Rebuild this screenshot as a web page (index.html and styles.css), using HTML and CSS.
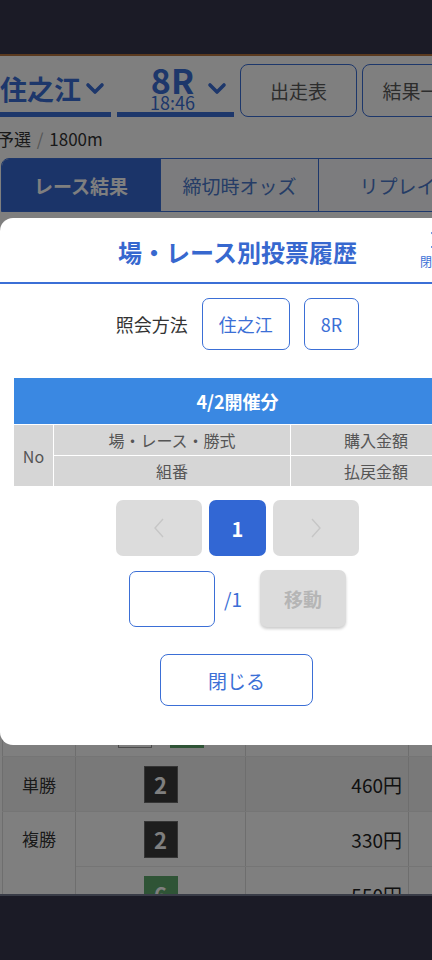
FILE: index.html
```html
<!DOCTYPE html>
<html lang="ja">
<head>
    <meta charset="UTF-8">
    <meta name="viewport" content="width=device-width, initial-scale=1.0">
    <title>場・レース別投票履歴</title>
    <link rel="stylesheet" href="styles.css">
</head>
<body>
    <div class="topbar"></div>

    <div class="page">
        <!-- Race selector -->
        <div class="race-nav">
            <div class="sel sel-place">
                <span class="place-name">住之江</span>
                <svg class="chev" width="20" height="13" viewBox="0 0 20 13"><path d="M3 3 L10 10 L17 3" fill="none" stroke="currentColor" stroke-width="3.6" stroke-linecap="round" stroke-linejoin="round"/></svg>
            </div>
            <div class="sel sel-race">
                <div class="race-label">
                    <span class="race-no">8R</span>
                    <span class="race-time">18:46</span>
                </div>
                <svg class="chev" width="20" height="13" viewBox="0 0 20 13"><path d="M3 3 L10 10 L17 3" fill="none" stroke="currentColor" stroke-width="3.6" stroke-linecap="round" stroke-linejoin="round"/></svg>
            </div>
            <button class="nav-btn">出走表</button>
            <button class="nav-btn">結果一覧</button>
        </div>

        <div class="race-meta">予選 <span class="slash">/</span> 1800m</div>

        <div class="tabs">
            <div class="tab active">レース結果</div>
            <div class="tab">締切時オッズ</div>
            <div class="tab">リプレイ</div>
        </div>

        <!-- Payouts -->
        <div class="section-title">払戻金</div>
        <table class="payouts">
            <tr class="head"><th>勝式</th><th>組番</th><th>払戻金</th><th>人気</th></tr>
            <tr class="odd"><td>3連単</td><td><span class="boat b2">2</span><span class="boat b6">6</span><span class="boat b1">1</span></td><td class="amt">4,560円</td><td>12</td></tr>
            <tr><td>3連複</td><td><span class="boat b1">1</span><span class="boat b2">2</span><span class="boat b6">6</span></td><td class="amt">1,230円</td><td>5</td></tr>
            <tr class="odd"><td>2連単</td><td><span class="boat b2">2</span><span class="boat b6">6</span></td><td class="amt">2,140円</td><td>8</td></tr>
            <tr><td>2連複</td><td><span class="boat b2">2</span><span class="boat b6">6</span></td><td class="amt">1,020円</td><td>4</td></tr>
            <tr class="odd"><td rowspan="3" class="top">拡連複</td><td><span class="boat b2">2</span><span class="boat b6">6</span></td><td class="amt">380円</td><td>4</td></tr>
            <tr class="odd"><td><span class="boat b1">1</span><span class="boat b2">2</span></td><td class="amt">210円</td><td>2</td></tr>
            <tr class="odd"><td><span class="boat b1">1</span><span class="boat b6">6</span></td><td class="amt">450円</td><td>6</td></tr>
            <tr class="even-alt"><td>単勝</td><td><span class="boat b2">2</span></td><td class="amt">460円</td><td>2</td></tr>
            <tr><td rowspan="2" class="top">複勝</td><td><span class="boat b2">2</span></td><td class="amt">330円</td><td>3</td></tr>
            <tr><td><span class="boat b6">6</span></td><td class="amt">550円</td><td>5</td></tr>
        </table>

        <div class="overlay"></div>

        <!-- Vote history dialog -->
        <div class="modal">
            <div class="modal-head">
                <div class="modal-title">場・レース別投票履歴</div>
                <button class="modal-x">
                    <svg width="16" height="18" viewBox="0 0 16 18"><path d="M1 2 L15 16 M15 2 L1 16" stroke="currentColor" stroke-width="1.8" stroke-linecap="round"/></svg>
                    <span>閉じる</span>
                </button>
            </div>

            <div class="query">
                <span class="query-label">照会方法</span>
                <button class="q-btn">住之江</button>
                <button class="q-btn">8R</button>
            </div>

            <div class="day-head">4/2開催分</div>
            <div class="hist-table">
                <div class="cell no">No</div>
                <div class="cell">場・レース・勝式</div>
                <div class="cell">購入金額</div>
                <div class="cell">組番</div>
                <div class="cell">払戻金額</div>
            </div>

            <div class="pager">
                <button class="pg pg-arrow">
                    <svg width="10" height="20" viewBox="0 0 10 20"><path d="M9 1 L1 10 L9 19" fill="none" stroke="currentColor" stroke-width="1.4"/></svg>
                </button>
                <button class="pg pg-current">1</button>
                <button class="pg pg-arrow">
                    <svg width="10" height="20" viewBox="0 0 10 20"><path d="M1 1 L9 10 L1 19" fill="none" stroke="currentColor" stroke-width="1.4"/></svg>
                </button>
            </div>

            <div class="jump">
                <input class="jump-input" type="text">
                <span class="jump-total">/1</span>
                <button class="jump-btn">移動</button>
            </div>

            <button class="close-btn">閉じる</button>
        </div>
    </div>

    <div class="bottombar"></div>
</body>
</html>
```

FILE: styles.css
```css
body {
    margin: 0;
    width: 432px;
    height: 960px;
    overflow: hidden;
    background-color: #1b1b26;
    font-family: "Noto Sans CJK JP", "Noto Sans", sans-serif;
    color: #333;
}

button {
    font-family: inherit;
    background: none;
    padding: 0;
    cursor: pointer;
}

.topbar {
    height: 54px;
    background-color: #1b1b26;
    border-bottom: 2px solid #5b3a1f;
}

.bottombar {
    height: 64px;
    background-color: #1b1b26;
    border-top: 2px solid #393c47;
}

.page {
    position: relative;
    height: 838px;
    overflow: hidden;
    background-color: #ffffff;
}

/* Race selector */
.race-nav {
    display: flex;
    height: 53px;
    margin-top: 8px;
    width: 600px;
}

.sel {
    display: flex;
    align-items: center;
    box-sizing: border-box;
    border-bottom: 5px solid #3a6ed6;
    color: #3a6ed6;
}

.sel-place {
    width: 111px;
}

.place-name {
    font-size: 27px;
    font-weight: bold;
    line-height: 30px;
    margin-top: 2px;
}

.sel-place .chev {
    margin-left: 4px;
}

.sel-race {
    width: 117px;
    margin-left: 6px;
    padding-left: 33px;
}

.race-label {
    display: flex;
    flex-direction: column;
    align-items: center;
}

.race-no {
    font-size: 34px;
    font-weight: bold;
    line-height: 27px;
}

.race-time {
    font-size: 18px;
    line-height: 18px;
}

.sel-race .chev {
    margin-left: 12px;
}

.nav-btn {
    width: 117px;
    margin-left: 6px;
    border: 1.5px solid #3a6ed6;
    border-radius: 8px;
    background-color: #fff;
    font-size: 19px;
    color: #5a5a5a;
}

.nav-btn + .nav-btn {
    margin-left: 5px;
}

.race-meta {
    margin: 11px 0 0 -3px;
    font-size: 17px;
    line-height: 22px;
    color: #333;
}

.slash {
    color: #aaa;
    margin: 0 2px;
}

/* Tabs */
.tabs {
    display: flex;
    width: 520px;
    height: 54px;
    margin: 8px 0 0 1px;
    box-sizing: border-box;
    border: 1px solid #3a6ed6;
    border-radius: 8px 8px 0 0;
    overflow: hidden;
}

.tab {
    width: 157px;
    display: flex;
    align-items: center;
    justify-content: center;
    font-size: 19px;
    color: #4a78cc;
    background-color: #f8f9fd;
    border-right: 1px solid #3a6ed6;
}

.tab.active {
    width: 158px;
    background-color: #3668d2;
    color: #fff;
    font-weight: bold;
}

/* Payouts */
.section-title {
    height: 40px;
    margin-top: 80px;
    font-size: 18px;
    font-weight: bold;
    line-height: 40px;
    padding-left: 10px;
}

.payouts {
    margin-left: 2px;
    border-collapse: collapse;
    table-layout: fixed;
    width: 466px;
    border-left: 1px solid #dcdcdc;
}

.payouts th,
.payouts td {
    height: 54px;
    padding: 0;
    border-right: 1px solid #dcdcdc;
    border-bottom: 1px solid #eaeaea;
    text-align: center;
    font-size: 17px;
    font-weight: normal;
    color: #333;
}

.payouts th {
    height: 39px;
    background-color: #eef2fa;
}

.payouts td:first-child { width: 72px; }
.payouts th:nth-child(1) { width: 72px; }
.payouts th:nth-child(2) { width: 169px; }
.payouts th:nth-child(3) { width: 162px; }

.payouts td.top {
    vertical-align: top;
    line-height: 54px;
}

.payouts .amt {
    text-align: right;
    padding-right: 6px;
    font-size: 19px;
    color: #222;
}

.payouts tr.even-alt td {
    background-color: #f3f3f3;
}

.boat {
    display: inline-flex;
    align-items: center;
    justify-content: center;
    width: 34px;
    height: 37px;
    box-sizing: border-box;
    margin: 0 9px;
    font-size: 22px;
    font-weight: bold;
    vertical-align: middle;
}

.b1 { background-color: #fff; border: 1px solid #999; color: #333; }
.b2 { background-color: #3a3a3a; border: 1px solid #6a6a6a; color: #fff; }
.b6 { background-color: #5ea86c; color: #fff; }

.overlay {
    position: absolute;
    top: 0;
    left: 0;
    right: 0;
    bottom: 0;
    background-color: rgba(0, 0, 0, 0.5);
}

/* Dialog */
.modal {
    position: absolute;
    top: 162px;
    left: 0;
    width: 475px;
    background-color: #fff;
    border-radius: 13px;
    padding-bottom: 39px;
}

.modal-head {
    position: relative;
    height: 64px;
    border-bottom: 2px solid #3b6fd6;
    display: flex;
    align-items: center;
    justify-content: center;
}

.modal-title {
    font-size: 24px;
    font-weight: bold;
    color: #3768cf;
    margin-top: 2px;
}

.modal-x {
    position: absolute;
    top: 13px;
    right: 19px;
    display: flex;
    flex-direction: column;
    align-items: center;
    border: none;
    color: #3b6fd6;
}

.modal-x svg {
    margin-left: 3px;
}

.modal-x span {
    font-size: 12px;
    line-height: 16px;
    margin-top: 5px;
}

.query {
    display: flex;
    align-items: center;
    justify-content: center;
    gap: 14px;
    margin-top: 14px;
}

.query-label {
    font-size: 18px;
    color: #333;
}

.q-btn {
    height: 52px;
    padding: 0 16px;
    border: 1.5px solid #3b6fd6;
    border-radius: 7px;
    background-color: #fff;
    font-size: 18px;
    color: #3b6fd6;
}

.day-head {
    margin: 28px 14px 0;
    height: 46px;
    background-color: #3a88e2;
    color: #fff;
    font-size: 18px;
    font-weight: bold;
    display: flex;
    align-items: center;
    justify-content: center;
}

.hist-table {
    display: grid;
    grid-template-columns: 39px 236px 1fr;
    grid-auto-rows: 30px;
    gap: 1px;
    margin: 1px 14px 0;
}

.hist-table .cell {
    background-color: #d6d6d6;
    display: flex;
    align-items: center;
    justify-content: center;
    font-size: 16px;
    color: #555;
}

.hist-table .no {
    grid-row: span 2;
}

.pager {
    display: flex;
    justify-content: center;
    gap: 7px;
    margin-top: 14px;
}

.pg {
    height: 56px;
    border: none;
    border-radius: 7px;
    display: flex;
    align-items: center;
    justify-content: center;
}

.pg-arrow {
    width: 86px;
    background-color: #dcdcdc;
    color: #c6c6c6;
}

.pg-current {
    width: 57px;
    background-color: #3267d4;
    color: #fff;
    font-size: 20px;
    font-weight: bold;
}

.jump {
    display: flex;
    align-items: center;
    justify-content: center;
    margin-top: 14px;
}

.jump-input {
    width: 86px;
    height: 56px;
    box-sizing: border-box;
    border: 1.5px solid #3b6fd6;
    border-radius: 7px;
    margin: 0;
}

.jump-total {
    margin-left: 9px;
    font-size: 19px;
    color: #3b6fd6;
}

.jump-btn {
    width: 86px;
    height: 57px;
    margin-left: 18px;
    border: none;
    border-radius: 7px;
    background-color: #dcdcdc;
    color: #b5b5b5;
    font-size: 19px;
    font-weight: bold;
    box-shadow: 0 2px 3px rgba(0, 0, 0, 0.2);
}

.close-btn {
    display: block;
    width: 153px;
    height: 52px;
    margin: 27px auto 0;
    border: 1.5px solid #3b6fd6;
    border-radius: 8px;
    background-color: #fff;
    font-size: 19px;
    color: #3b6fd6;
    position: relative;
    left: -1px;
}
```
